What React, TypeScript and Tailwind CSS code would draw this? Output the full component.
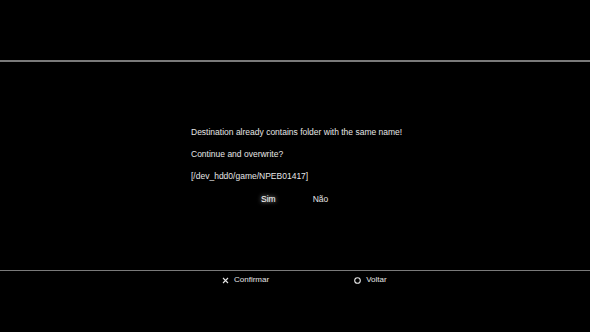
export default function App() {
  return (
    <main
      className="w-[590px] h-[332px] bg-black text-[#e6e6e6] flex flex-col overflow-hidden"
      style={{ fontFamily: '"Liberation Sans", Arial, sans-serif' }}
    >
      <div className="h-[60px]" />
      <div className="h-[2px] bg-[#7a7a7a]" />
      <section className="flex-1 flex flex-col pl-[191px] pt-[65px] text-[8.5px] leading-[10px]">
        <p>Destination already contains folder with the same name!</p>
        <p className="mt-[12px]">Continue and overwrite?</p>
        <p className="mt-[12px]">[/dev_hdd0/game/NPEB01417]</p>
        <div className="flex mt-[13px] pl-[70px] gap-[37px]">
          <span className="text-white [text-shadow:0_0_4px_rgba(255,255,255,0.9)]">Sim</span>
          <span>Não</span>
        </div>
      </section>
      <div className="h-[1px] bg-[#7a7a7a]" />
      <footer className="h-[61px] flex items-start pt-[4px] pl-[222px] text-[8px] leading-[10px]">
        <div className="flex items-center gap-[5px]">
          <svg width="7" height="7" viewBox="0 0 7 7">
            <path d="M1 1 L6 6 M6 1 L1 6" stroke="#e6e6e6" strokeWidth="1.1" />
          </svg>
          <span>Confirmar</span>
        </div>
        <div className="flex items-center gap-[5px] ml-[85px]">
          <svg width="7" height="7" viewBox="0 0 7 7">
            <circle cx="3.5" cy="3.5" r="2.8" fill="none" stroke="#e6e6e6" strokeWidth="1.1" />
          </svg>
          <span>Voltar</span>
        </div>
      </footer>
    </main>
  );
}
